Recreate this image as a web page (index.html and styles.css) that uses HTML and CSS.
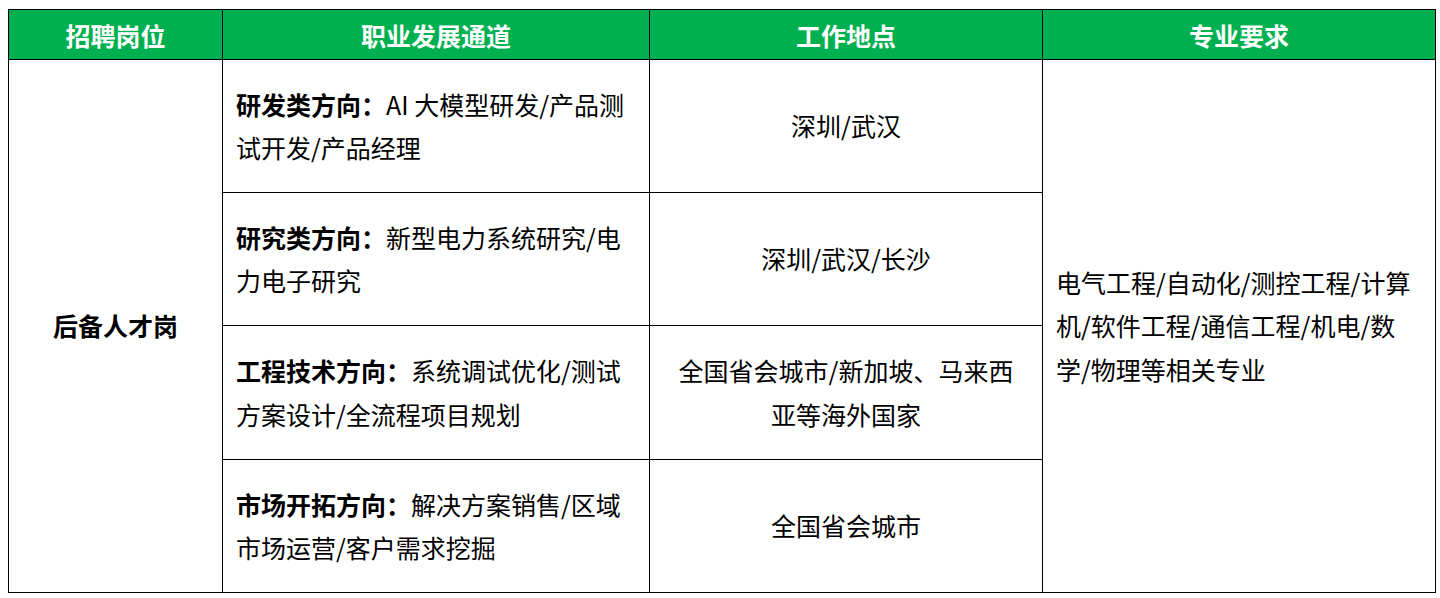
FILE: index.html
```html
<!DOCTYPE html>
<html lang="zh-CN">
<head>
<meta charset="utf-8">
<title>招聘岗位</title>
<link rel="stylesheet" href="styles.css">
</head>
<body>
<div class="wrap">
<table class="jobs">
  <colgroup>
    <col class="c1">
    <col class="c2">
    <col class="c3">
    <col class="c4">
  </colgroup>
  <thead>
    <tr class="head">
      <th>招聘岗位</th>
      <th>职业发展通道</th>
      <th>工作地点</th>
      <th>专业要求</th>
    </tr>
  </thead>
  <tbody>
    <tr class="row">
      <td class="post" rowspan="4">后备人才岗</td>
      <td class="path"><b>研发类方向：</b>AI 大模型研发/产品测试开发/产品经理</td>
      <td class="loc">深圳/武汉</td>
      <td class="major" rowspan="4">电气工程/自动化/测控工程/计算机/软件工程/通信工程/机电/数学/物理等相关专业</td>
    </tr>
    <tr class="row">
      <td class="path"><b>研究类方向：</b>新型电力系统研究/电力电子研究</td>
      <td class="loc">深圳/武汉/长沙</td>
    </tr>
    <tr class="row row3">
      <td class="path"><b>工程技术方向：</b>系统调试优化/测试方案设计/全流程项目规划</td>
      <td class="loc">全国省会城市/新加坡、马来西亚等海外国家</td>
    </tr>
    <tr class="row">
      <td class="path"><b>市场开拓方向：</b>解决方案销售/区域市场运营/客户需求挖掘</td>
      <td class="loc">全国省会城市</td>
    </tr>
  </tbody>
</table>
</div>
</body>
</html>
```
FILE: styles.css
```css
html, body {
  margin: 0;
  padding: 0;
  background: #ffffff;
}

.wrap {
  padding: 9px 0 0 8px;
}

.jobs {
  width: 1427px;
  table-layout: fixed;
  border-collapse: collapse;
  font-family: "Noto Sans CJK SC", "Microsoft YaHei", sans-serif;
  font-size: 25px;
  line-height: 43.5px;
  color: #000000;
}

.c1 { width: 214px; }
.c2 { width: 427px; }
.c3 { width: 393px; }
.c4 { width: 393px; }

.jobs th,
.jobs td {
  border: 1px solid #000000;
  vertical-align: middle;
  padding: 0;
}

.head {
  height: 50px;
}

.head th {
  background: #00b050;
  color: #ffffff;
  font-weight: 700;
  text-align: center;
  line-height: 30px;
}

.row {
  height: 133px;
}

.row3 {
  height: 134px;
}

.post {
  text-align: center;
  font-weight: 700;
}

.path {
  text-align: left;
  padding: 0 16px 0 13px !important;
}

.path b {
  font-weight: 700;
}

.loc {
  text-align: center;
  padding: 0 20px !important;
}

.major {
  text-align: left;
  padding: 0 17px 0 13px !important;
}
```
